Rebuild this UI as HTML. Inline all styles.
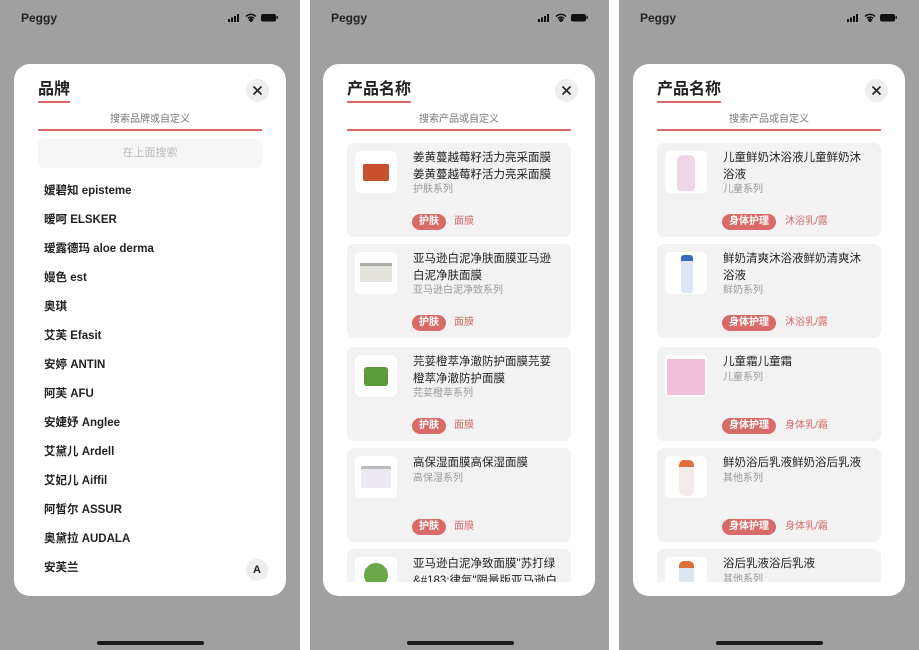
<!DOCTYPE html>
<html><head><meta charset="utf-8"><style>
*{margin:0;padding:0;box-sizing:border-box}
body{width:919px;height:650px;background:#fff;position:relative;overflow:hidden;font-family:"Liberation Sans","Noto Sans CJK SC",sans-serif}
.ph{position:absolute;top:0;width:300px;height:650px;background:#a0a0a0;overflow:hidden}
.peg{position:absolute;left:21px;top:11px;font-size:12px;font-weight:bold;color:#222}
.st{position:absolute;right:20px;top:13px;height:9px;width:52px}
.home{position:absolute;left:97px;top:641px;width:107px;height:4px;border-radius:2px;background:#1a1a1a}
.m{position:absolute;left:14px;top:64px;width:272px;height:532px;background:#fff;border-radius:16px;overflow:hidden}
.tt{position:absolute;left:24px;top:15px;font-size:16px;font-weight:bold;color:#222;line-height:22px}
.tt:after{content:"";position:absolute;left:0;right:0;bottom:-2px;height:2px;background:#d86a6a}
.cl{position:absolute;left:232px;top:15px;width:23px;height:23px;border-radius:50%;background:#eee}
.sp{position:absolute;left:24px;top:46px;width:224px;text-align:center;font-size:10px;color:#777;height:21px;border-bottom:2px solid #d86a6a}
.sb{position:absolute;left:24px;top:75px;width:224px;height:29px;background:#f6f6f6;border-radius:6px;text-align:center;line-height:29px;font-size:11px;color:#bbb}
.li{position:absolute;left:30px;font-size:11.5px;color:#222;font-weight:bold}
.A{position:absolute;left:232px;top:495px;width:22px;height:22px;border-radius:50%;background:#eee;font-size:11px;font-weight:bold;text-align:center;line-height:22px;color:#222}
.lst{position:absolute;left:24px;top:79px;width:224px;height:439px;overflow:hidden}
.c{position:absolute;left:0;width:224px;height:94px;background:#f2f2f2;border-radius:7px}
.im{position:absolute;left:8px;top:8px;width:42px;height:42px;background:#fff;border-radius:5px;overflow:hidden}
.ti{position:absolute;left:66px;top:7px;width:148px;font-size:11.5px;line-height:16.5px;color:#222}
.sr{display:block;font-size:10px;color:#999;line-height:14px}
.tg{position:absolute;left:65px;top:71px;height:16px;line-height:16px;padding:0 7px;border-radius:8px;background:#d86a6a;color:#fff;font-size:10px;font-weight:bold}
.t2{position:absolute;top:71px;line-height:16px;font-size:10px;color:#d86a6a}
</style></head><body>

<!-- phone 1 -->
<div class="ph" style="left:0">
<div class="peg">Peggy</div>
<svg class="st" viewBox="0 0 52 9"><rect x="0" y="6" width="2" height="3" fill="#111"/><rect x="3" y="4.5" width="2" height="4.5" fill="#111"/><rect x="6" y="3" width="2" height="6" fill="#111"/><rect x="9" y="1" width="2" height="8" fill="#111"/><path d="M18 3.5a7 7 0 0 1 10 0M20 5.5a4 4 0 0 1 6 0M23 8.5l1.5-1.5-1.5-1.3-1.5 1.3z" stroke="#111" stroke-width="1.5" fill="none"/><rect x="33" y="1" width="15" height="7.5" rx="2" fill="#111"/><rect x="48.5" y="3" width="1.3" height="3" fill="#111"/></svg>
<div class="m">
<div class="tt">品牌</div>
<div class="cl"><svg width="23" height="23"><path d="M7.5 7.5l8 8M15.5 7.5l-8 8" stroke="#222" stroke-width="1.6"/></svg></div>
<div class="sp">搜索品牌或自定义</div>
<div class="sb">在上面搜索</div>
<div class="li" style="top:118px">嫒碧知 episteme</div>
<div class="li" style="top:147px">暧呵 ELSKER</div>
<div class="li" style="top:176px">瑷露德玛 aloe derma</div>
<div class="li" style="top:205px">嫚色 est</div>
<div class="li" style="top:234px">奥琪</div>
<div class="li" style="top:263px">艾芙 Efasit</div>
<div class="li" style="top:292px">安婷 ANTIN</div>
<div class="li" style="top:321px">阿芙 AFU</div>
<div class="li" style="top:350px">安婕妤 Anglee</div>
<div class="li" style="top:379px">艾黛儿 Ardell</div>
<div class="li" style="top:408px">艾妃儿 Aiffil</div>
<div class="li" style="top:437px">阿皙尔 ASSUR</div>
<div class="li" style="top:466px">奥黛拉 AUDALA</div>
<div class="li" style="top:495px">安芙兰</div>
<div class="A">A</div>
</div>
<div class="home"></div>
</div>

<!-- phone 2 -->
<div class="ph" style="left:310px;width:299px">
<div class="peg">Peggy</div>
<svg class="st" viewBox="0 0 52 9" style="right:19px"><rect x="0" y="6" width="2" height="3" fill="#111"/><rect x="3" y="4.5" width="2" height="4.5" fill="#111"/><rect x="6" y="3" width="2" height="6" fill="#111"/><rect x="9" y="1" width="2" height="8" fill="#111"/><path d="M18 3.5a7 7 0 0 1 10 0M20 5.5a4 4 0 0 1 6 0M23 8.5l1.5-1.5-1.5-1.3-1.5 1.3z" stroke="#111" stroke-width="1.5" fill="none"/><rect x="33" y="1" width="15" height="7.5" rx="2" fill="#111"/><rect x="48.5" y="3" width="1.3" height="3" fill="#111"/></svg>
<div class="m" style="left:13px">
<div class="tt">产品名称</div>
<div class="cl"><svg width="23" height="23"><path d="M7.5 7.5l8 8M15.5 7.5l-8 8" stroke="#222" stroke-width="1.6"/></svg></div>
<div class="sp">搜索产品或自定义</div>
<div class="lst">
<div class="c" style="top:0"><div class="im"><div style="position:absolute;left:8px;top:13px;width:26px;height:17px;background:#c8502a;border-radius:2px"></div></div><div class="ti">姜黄蔓越莓籽活力亮采面膜姜黄蔓越莓籽活力亮采面膜<span class="sr">护肤系列</span></div><div class="tg">护肤</div><div class="t2" style="left:107px">面膜</div></div>
<div class="c" style="top:101px"><div class="im"><div style="position:absolute;left:5px;top:11px;width:32px;height:19px;background:#e4e2dc;border-top:3px solid #aaa"></div></div><div class="ti">亚马逊白泥净肤面膜亚马逊白泥净肤面膜<span class="sr">亚马逊白泥净致系列</span></div><div class="tg">护肤</div><div class="t2" style="left:107px">面膜</div></div>
<div class="c" style="top:204px"><div class="im"><div style="position:absolute;left:9px;top:12px;width:24px;height:19px;background:#5a9a3a;border-radius:3px"></div></div><div class="ti">芫荽橙萃净澈防护面膜芫荽橙萃净澈防护面膜<span class="sr">芫荽橙萃系列</span></div><div class="tg">护肤</div><div class="t2" style="left:107px">面膜</div></div>
<div class="c" style="top:305px"><div class="im"><div style="position:absolute;left:6px;top:10px;width:30px;height:22px;background:#ece9f0;border-top:3px solid #bbb;border-radius:2px"></div></div><div class="ti">高保湿面膜高保湿面膜<span class="sr">高保湿系列</span></div><div class="tg">护肤</div><div class="t2" style="left:107px">面膜</div></div>
<div class="c" style="top:406px"><div class="im"><div style="position:absolute;left:9px;top:6px;width:24px;height:24px;background:#6aa84a;border-radius:50%"></div></div><div class="ti">亚马逊白泥净致面膜"苏打绿&amp;#183;律氣"限量版亚马逊白</div></div>
</div>
</div>
<div class="home"></div>
</div>

<!-- phone 3 -->
<div class="ph" style="left:619px">
<div class="peg">Peggy</div>
<svg class="st" viewBox="0 0 52 9"><rect x="0" y="6" width="2" height="3" fill="#111"/><rect x="3" y="4.5" width="2" height="4.5" fill="#111"/><rect x="6" y="3" width="2" height="6" fill="#111"/><rect x="9" y="1" width="2" height="8" fill="#111"/><path d="M18 3.5a7 7 0 0 1 10 0M20 5.5a4 4 0 0 1 6 0M23 8.5l1.5-1.5-1.5-1.3-1.5 1.3z" stroke="#111" stroke-width="1.5" fill="none"/><rect x="33" y="1" width="15" height="7.5" rx="2" fill="#111"/><rect x="48.5" y="3" width="1.3" height="3" fill="#111"/></svg>
<div class="m">
<div class="tt">产品名称</div>
<div class="cl"><svg width="23" height="23"><path d="M7.5 7.5l8 8M15.5 7.5l-8 8" stroke="#222" stroke-width="1.6"/></svg></div>
<div class="sp">搜索产品或自定义</div>
<div class="lst">
<div class="c" style="top:0"><div class="im"><div style="position:absolute;left:12px;top:4px;width:18px;height:36px;background:#eed6e6;border-radius:6px 6px 3px 3px"></div></div><div class="ti">儿童鲜奶沐浴液儿童鲜奶沐浴液<span class="sr">儿童系列</span></div><div class="tg">身体护理</div><div class="t2" style="left:128px">沐浴乳/露</div></div>
<div class="c" style="top:101px"><div class="im"><div style="position:absolute;left:16px;top:3px;width:12px;height:38px;background:#dde6f4;border-top:6px solid #3a6ac0;border-radius:3px"></div></div><div class="ti">鲜奶清爽沐浴液鲜奶清爽沐浴液<span class="sr">鲜奶系列</span></div><div class="tg">身体护理</div><div class="t2" style="left:128px">沐浴乳/露</div></div>
<div class="c" style="top:204px"><div class="im"><div style="position:absolute;left:2px;top:4px;width:38px;height:36px;background:#f0c0d8"></div></div><div class="ti">儿童霜儿童霜<span class="sr">儿童系列</span></div><div class="tg">身体护理</div><div class="t2" style="left:128px">身体乳/霜</div></div>
<div class="c" style="top:305px"><div class="im"><div style="position:absolute;left:14px;top:4px;width:15px;height:36px;background:#f3ecea;border-top:7px solid #e0703a;border-radius:5px"></div></div><div class="ti">鲜奶浴后乳液鲜奶浴后乳液<span class="sr">其他系列</span></div><div class="tg">身体护理</div><div class="t2" style="left:128px">身体乳/霜</div></div>
<div class="c" style="top:406px"><div class="im"><div style="position:absolute;left:14px;top:4px;width:15px;height:36px;background:#dbe6f0;border-top:7px solid #e0703a;border-radius:5px"></div></div><div class="ti">浴后乳液浴后乳液<span class="sr">其他系列</span></div></div>
</div>
</div>
<div class="home"></div>
</div>
</body></html>
